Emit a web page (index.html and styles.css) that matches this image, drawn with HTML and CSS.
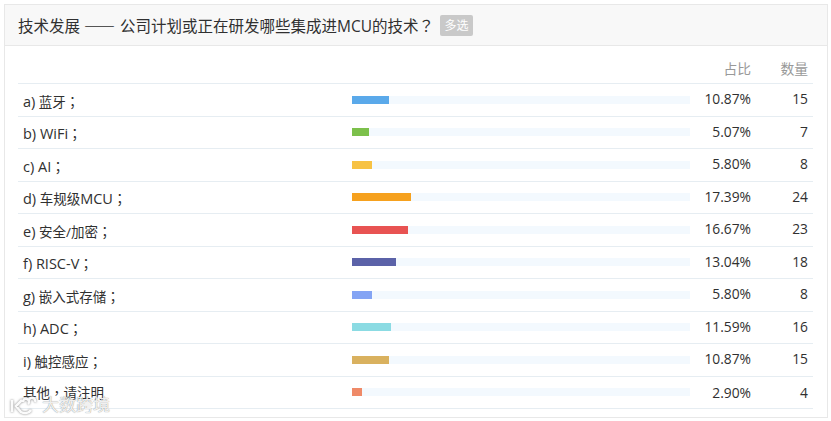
FILE: index.html
```html
<!DOCTYPE html>
<html lang="zh">
<head>
<meta charset="utf-8">
<title>技术发展</title>
<link rel="stylesheet" href="styles.css">
</head>
<body>
<section class="card">
  <header class="card-head">
    <h2 class="title">技术发展 <span class="dash">——</span> 公司计划或正在研发哪些集成进MCU的技术<span class="punct" lang="zh-Hant">？</span></h2>
    <span class="tag">多选</span>
  </header>
  <div class="results">
    <div class="row row-head"><span></span><span></span><span class="num">占比</span><span class="num">数量</span></div>
    <div class="row"><span class="label"><span class="latin">a)</span> 蓝牙<span class="punct" lang="zh-Hant">；</span></span><div class="track"><div class="fill c1" style="width:10.87%"></div></div><span class="num">10.87%</span><span class="num">15</span></div>
    <div class="row"><span class="label"><span class="latin">b) WiFi</span><span class="punct" lang="zh-Hant">；</span></span><div class="track"><div class="fill c2" style="width:5.07%"></div></div><span class="num">5.07%</span><span class="num">7</span></div>
    <div class="row"><span class="label"><span class="latin">c) AI</span><span class="punct" lang="zh-Hant">；</span></span><div class="track"><div class="fill c3" style="width:5.8%"></div></div><span class="num">5.80%</span><span class="num">8</span></div>
    <div class="row"><span class="label"><span class="latin">d)</span> 车规级<span class="latin">MCU</span><span class="punct" lang="zh-Hant">；</span></span><div class="track"><div class="fill c4" style="width:17.39%"></div></div><span class="num">17.39%</span><span class="num">24</span></div>
    <div class="row"><span class="label"><span class="latin">e)</span> 安全/加密<span class="punct" lang="zh-Hant">；</span></span><div class="track"><div class="fill c5" style="width:16.67%"></div></div><span class="num">16.67%</span><span class="num">23</span></div>
    <div class="row"><span class="label"><span class="latin">f) RISC-V</span><span class="punct" lang="zh-Hant">；</span></span><div class="track"><div class="fill c6" style="width:13.04%"></div></div><span class="num">13.04%</span><span class="num">18</span></div>
    <div class="row"><span class="label"><span class="latin">g)</span> 嵌入式存储<span class="punct" lang="zh-Hant">；</span></span><div class="track"><div class="fill c7" style="width:5.8%"></div></div><span class="num">5.80%</span><span class="num">8</span></div>
    <div class="row"><span class="label"><span class="latin">h) ADC</span><span class="punct" lang="zh-Hant">；</span></span><div class="track"><div class="fill c8" style="width:11.59%"></div></div><span class="num">11.59%</span><span class="num">16</span></div>
    <div class="row"><span class="label"><span class="latin">i)</span> 触控感应<span class="punct" lang="zh-Hant">；</span></span><div class="track"><div class="fill c9" style="width:10.87%"></div></div><span class="num">10.87%</span><span class="num">15</span></div>
    <div class="row row-other"><span class="label">其他<span class="punct" lang="zh-Hant">，</span>请注明</span><div class="track"><div class="fill c10" style="width:2.9%"></div></div><span class="num">2.90%</span><span class="num">4</span></div>
  </div>
  <div class="watermark">
    <svg class="wm-logo" viewBox="0 0 32 24" width="32" height="24" aria-hidden="true"><path d="M4 7v12M14 7 8 13l5 6c4 2 8 1 10-2M15 9a3 3 0 1 1 5 2M21 7a3 3 0 1 1 6 2"/></svg>
    <span>大数跨境</span>
  </div>
</section>
</body>
</html>
```
FILE: styles.css
```css
* { box-sizing: border-box; }
html, body { margin: 0; background: #fff; }
body {
  width: 831px;
  height: 421px;
  padding: 4px 3px 3px 4px;
  font-family: "Open Sans", "Noto Sans CJK SC", sans-serif;
  color: #303030;
  overflow: hidden;
}
.card {
  position: relative;
  height: 414px;
  border: 1px solid #e8e8e8;
  background: #fff;
}
.card-head {
  display: flex;
  align-items: center;
  gap: 6px;
  height: 41px;
  padding-left: 13px;
  background: #f8f8f8;
  border-bottom: 1px solid #e8e8e8;
}
.title {
  margin: 0;
  font-size: 15.5px;
  font-weight: 400;
  color: #303030;
  text-spacing-trim: space-all;
}
.dash {
  font-family: "Noto Sans CJK SC", sans-serif;
  letter-spacing: 1px;
}
.punct {
  font-family: "Noto Sans CJK TC", sans-serif;
  text-spacing-trim: space-all;
}
.tag {
  padding: 0 4.5px;
  line-height: 21px;
  font-size: 12px;
  color: #fff;
  background: #c9c9c9;
  border-radius: 2px;
}
.results { padding: 0 14px 0 13px; }
.row {
  display: grid;
  grid-template-columns: 334px 338px 61px 57px;
  align-items: center;
  height: 32.5px;
  padding-right: 6px;
  font-size: 13.8px;
  border-bottom: 1px solid #e6edf2;
}
.row-head {
  height: 38px;
  padding-top: 9px;
  color: #999;
}
.label { padding: 2px 0 0 5px; font-size: 13.5px; text-spacing-trim: space-all; }
.latin { font-size: 14.5px; }
.num { text-align: right; padding-bottom: 2px; }
.row-other .label { padding-top: 0; }
.row-other .num { padding-bottom: 0; }
.track { height: 8px; background: #f3f9fe; }
.fill { height: 8px; }
.c1 { background: #5aa9ea; }
.c2 { background: #7cc04b; }
.c3 { background: #f7c244; }
.c4 { background: #f6a11e; }
.c5 { background: #e85352; }
.c6 { background: #5b62a8; }
.c7 { background: #84a4f4; }
.c8 { background: #8bdbe3; }
.c9 { background: #d9b15f; }
.c10 { background: #ef8a68; }
.watermark {
  position: absolute;
  left: 3px;
  bottom: 0;
  display: flex;
  align-items: center;
  gap: 2px;
  font-size: 17px;
  line-height: 24px;
  color: rgba(255, 255, 255, .9);
  text-shadow: 0 0 1px rgba(110, 110, 110, 1);
}
.wm-logo {
  fill: none;
  stroke: rgba(255, 255, 255, .95);
  stroke-width: 2.5;
  filter: drop-shadow(0 0 1px rgba(110, 110, 110, .9));
}
```
